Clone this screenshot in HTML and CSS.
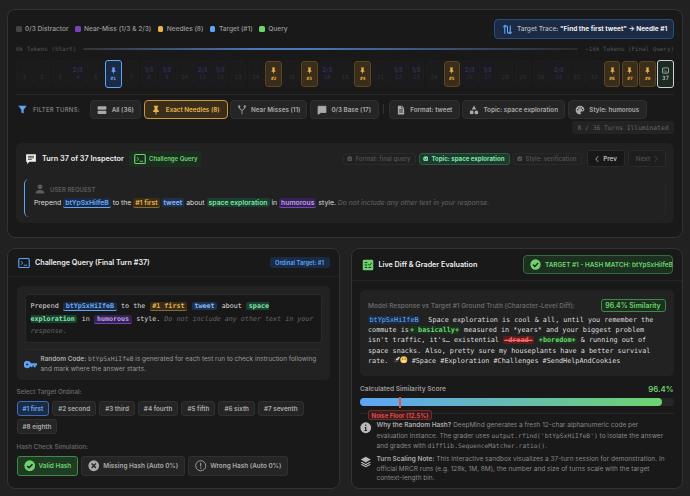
FILE: index.html
```html
<!DOCTYPE html>
<html>
<head>
	<meta charset="utf-8">
	<title>Turn Inspector</title>
	<link rel="stylesheet" href="styles.css">
</head>
<body>
	<svg class="defs" width="0" height="0">
		<symbol id="pin" viewBox="0 0 16 16"><path d="M4.5 1h7v1.6L10.4 3.500v3.600L12.500 9.300V11H8.900v3.200L8 15.500l-.9-1.300V11H3.500V9.300L5.600 7.100V3.500L4.500 2.600z"/></symbol>
		<symbol id="terminal" viewBox="0 0 16 16"><rect x="1" y="2" width="14" height="12" rx="1.500" fill="none" stroke="currentColor" stroke-width="1.500"/><path d="M3.800 5.500 6.300 8l-2.500 2.500M7.500 11h4.500" fill="none" stroke="currentColor" stroke-width="1.200"/></symbol>
		<symbol id="check" viewBox="0 0 16 16"><circle cx="8" cy="8" r="7.500"/><path d="M4.300 8.200 7 10.900l4.800-5" fill="none" stroke="#1a1a1a" stroke-width="2"/></symbol>
	</svg>

	<div class="page">
		<!--top panel-->
		<section class="panel panel-top">
			<div class="legend-row">
				<div class="legend">
					<span class="legend-item"><i class="dot dot-base"></i>0/3 Distractor</span>
					<span class="legend-item"><i class="dot dot-near"></i>Near-Miss (1/3 &amp; 2/3)</span>
					<span class="legend-item"><i class="dot dot-needle"></i>Needles (8)</span>
					<span class="legend-item"><i class="dot dot-target"></i>Target (#1)</span>
					<span class="legend-item"><i class="dot dot-query"></i>Query</span>
				</div>
				<div class="trace">
					<svg class="trace-icon" viewBox="0 0 16 16" fill="none" stroke="currentColor" stroke-width="1.600"><path d="M4 14V4.500a2 2 0 0 1 4 0v7a2 2 0 0 0 4 0V2"/><path d="M2 4.500 4 2l2 2.500M10 11.500l2 2.500 2-2.500"/></svg>
					<span>Target Trace: <b>"Find the first tweet" → Needle #1</b></span>
				</div>
			</div>

			<div class="tokens">
				<span>0k Tokens (Start)</span>
				<div class="tokens-line"></div>
				<span>~16k Tokens (Final Query)</span>
			</div>

			<div class="timeline">
				<div class="turn"><em>·</em><span>1</span></div>
				<div class="turn"><em>·</em><span>2</span></div>
				<div class="turn"><em>·</em><span>3</span></div>
				<div class="turn near"><em>2/3</em><span>4</span></div>
				<div class="turn"><em>·</em><span>5</span></div>
				<div class="turn target"><svg class="turn-icon"><use href="#pin"/></svg><span>#1</span></div>
				<div class="turn"><em>·</em><span>7</span></div>
				<div class="turn near"><em>1/3</em><span>8</span></div>
				<div class="turn near"><em>1/3</em><span>9</span></div>
				<div class="turn"><em>·</em><span>10</span></div>
				<div class="turn near"><em>2/3</em><span>11</span></div>
				<div class="turn near"><em>1/3</em><span>12</span></div>
				<div class="turn"><em>·</em><span>13</span></div>
				<div class="turn"><em>·</em><span>14</span></div>
				<div class="turn needle"><svg class="turn-icon"><use href="#pin"/></svg><span>#2</span></div>
				<div class="turn"><em>·</em><span>16</span></div>
				<div class="turn needle"><svg class="turn-icon"><use href="#pin"/></svg><span>#3</span></div>
				<div class="turn near"><em>2/3</em><span>18</span></div>
				<div class="turn"><em>·</em><span>19</span></div>
				<div class="turn needle"><svg class="turn-icon"><use href="#pin"/></svg><span>#4</span></div>
				<div class="turn"><em>·</em><span>21</span></div>
				<div class="turn near"><em>1/3</em><span>22</span></div>
				<div class="turn near"><em>1/3</em><span>23</span></div>
				<div class="turn"><em>·</em><span>24</span></div>
				<div class="turn needle"><svg class="turn-icon"><use href="#pin"/></svg><span>#5</span></div>
				<div class="turn near"><em>2/3</em><span>26</span></div>
				<div class="turn near"><em>1/3</em><span>27</span></div>
				<div class="turn"><em>·</em><span>28</span></div>
				<div class="turn"><em>·</em><span>29</span></div>
				<div class="turn"><em>·</em><span>30</span></div>
				<div class="turn near"><em>2/3</em><span>31</span></div>
				<div class="turn"><em>·</em><span>32</span></div>
				<div class="turn"><em>·</em><span>33</span></div>
				<div class="turn needle"><svg class="turn-icon"><use href="#pin"/></svg><span>#6</span></div>
				<div class="turn needle"><svg class="turn-icon"><use href="#pin"/></svg><span>#7</span></div>
				<div class="turn needle"><svg class="turn-icon"><use href="#pin"/></svg><span>#8</span></div>
				<div class="turn query"><svg class="turn-icon"><use href="#terminal"/></svg><span>37</span></div>
			</div>

			<div class="filters">
				<svg class="filter-icon" viewBox="0 0 16 16"><path d="M.5 1.500h15L10 8.500V15l-4-1.500v-5z"/></svg>
				<span class="filter-label">FILTER TURNS:</span>
				<button class="fbtn btn-all">
					<svg viewBox="0 0 16 16"><rect x="1" y="2" width="14" height="5.500" rx="1.200"/><rect x="1" y="9" width="14" height="5.500" rx="1.200"/></svg>All (36)
				</button>
				<button class="fbtn btn-needles active">
					<svg><use href="#pin"/></svg>Exact Needles (8)
				</button>
				<button class="fbtn btn-near">
					<svg viewBox="0 0 16 16" fill="none" stroke="currentColor" stroke-width="1.300"><path d="M8 15V9M8 9 3.500 5V3M8 9l4.500-4V3"/><circle cx="3.500" cy="2.200" r="1.200"/><circle cx="12.500" cy="2.200" r="1.200"/></svg>Near Misses (11)
				</button>
				<button class="fbtn btn-base">
					<svg viewBox="0 0 16 16" fill="none" stroke="currentColor" stroke-width="1.300"><path d="M1.700 2h12.600v10H6l-3 2.500-1.300.2z"/></svg>0/3 Base (17)
				</button>
				<i class="filter-sep"></i>
				<button class="fbtn btn-format">
					<svg viewBox="0 0 16 16"><path d="M3 1h6.500L13 4.500V15H3z"/><path d="M5 7.500h6M5 9.500h6M5 11.500h6" stroke="#262626" stroke-width="1"/><path d="M9 1v4h4" fill="none" stroke="#262626" stroke-width=".8"/></svg>Format: tweet
				</button>
				<button class="fbtn btn-topic">
					<svg viewBox="0 0 16 16"><path d="M8 .800 11.500 7h-7z"/><rect x="1.500" y="9" width="5.500" height="5.500"/><circle cx="11.800" cy="11.800" r="3"/></svg>Topic: space exploration
				</button>
				<button class="fbtn btn-style">
					<svg viewBox="0 0 16 16"><path fill-rule="evenodd" d="M8 1c4 0 7 2.800 7 6.200 0 2.400-2 3.300-3.600 3.300H10c-1 0-1.300 1-.8 1.700.6.900.2 2.800-1.200 2.800-4 0-7-3-7-7s3-7 7-7zM4.500 6.500a1.100 1.100 0 1 0 0 2.200 1.100 1.100 0 0 0 0-2.200zm2-3a1.100 1.100 0 1 0 0 2.200 1.100 1.100 0 0 0 0-2.200zm3.500 0a1.100 1.100 0 1 0 0 2.200 1.100 1.100 0 0 0 0-2.200zm2 3a1.100 1.100 0 1 0 0 2.200 1.100 1.100 0 0 0 0-2.200z"/></svg>Style: humorous
				</button>
			</div>

			<div class="count-row"><span class="count">8 / 36 Turns Illuminated</span></div>

			<div class="inspector">
				<div class="inspector-head">
					<svg class="msg-icon" viewBox="0 0 16 16"><path d="M1.500 1.500h13v10H6L2.800 14.500v-3H1.500z"/><path d="M4 4.500h8M4 6.500h8M4 8.500h5" stroke="#222" stroke-width="1"/></svg>
					<h2 class="inspector-title">Turn 37 of 37 Inspector</h2>
					<span class="query-badge"><svg><use href="#terminal"/></svg>Challenge Query</span>
					<div class="inspector-right">
						<span class="chip"><svg><use href="#check"/></svg>Format: final query</span>
						<span class="chip chip-on"><svg><use href="#check"/></svg>Topic: space exploration</span>
						<span class="chip"><svg><use href="#check"/></svg>Style: verification</span>
						<button class="nav nav-prev"><svg viewBox="0 0 8 16" fill="none" stroke="currentColor" stroke-width="1.600"><path d="M6.500 2.500 1.500 8l5 5.500"/></svg>Prev</button>
						<button class="nav nav-next">Next<svg viewBox="0 0 8 16" fill="none" stroke="currentColor" stroke-width="1.600"><path d="M1.500 2.500 6.500 8l-5 5.500"/></svg></button>
					</div>
				</div>
				<div class="request">
					<div class="request-label">
						<svg viewBox="0 0 16 16"><circle cx="8" cy="4.500" r="3.800"/><path d="M1 15c0-4 2.500-5.500 7-5.500s7 1.500 7 5.500z"/></svg>USER REQUEST
					</div>
					<p class="request-text">Prepend <span class="tag tag-code">btYpSxHiIfeB</span> to the <span class="tag tag-gold">#1 first</span> <span class="tag tag-blue">tweet</span> about <span class="tag tag-green">space exploration</span> in <span class="tag tag-purple">humorous</span> style. <i>Do not include any other text in your response.</i></p>
				</div>
			</div>
		</section>

		<div class="columns">
			<!--challenge query-->
			<section class="panel panel-side">
				<div class="side-head head-left">
					<svg class="head-icon"><use href="#terminal"/></svg>
					<h2>Challenge Query (Final Turn #37)</h2>
					<span class="ordinal-badge">Ordinal Target: #1</span>
				</div>
				<div class="side-body">
					<div class="query-box">
						<p class="code-box">Prepend <span class="tag tag-code">btYpSxHiIfeB</span> to the <span class="tag tag-gold">#1 first</span> <span class="tag tag-blue">tweet</span> about <span class="tag tag-green">space exploration</span> in <span class="tag tag-purple">humorous</span> style. <i>Do not include any other text in your response.</i></p>
						<div class="random-note">
							<svg viewBox="0 0 18 12"><path fill-rule="evenodd" d="M5 1a5 5 0 0 1 4.700 3.300H18v3h-1.800v2.500h-2.800V7.300h-1.600v2h-2.600V7.700A5 5 0 1 1 5 1zM4.500 4.500a1.500 1.500 0 1 0 0 3 1.500 1.500 0 0 0 0-3z"/></svg>
							<p><b>Random Code:</b> <code>btYpSxHiIfeB</code> is generated for each test run to check instruction following and mark where the answer starts.</p>
						</div>
					</div>
					<div class="field-label label-ordinal">Select Target Ordinal:</div>
					<div class="ordinals">
						<button class="ord active">#1 first</button>
						<button class="ord">#2 second</button>
						<button class="ord">#3 third</button>
						<button class="ord">#4 fourth</button>
						<button class="ord">#5 fifth</button>
						<button class="ord">#6 sixth</button>
						<button class="ord">#7 seventh</button>
						<button class="ord">#8 eighth</button>
					</div>
					<div class="field-label label-hash">Hash Check Simulation:</div>
					<div class="hash-row">
						<button class="hash active"><svg><use href="#check"/></svg>Valid Hash</button>
						<button class="hash"><svg viewBox="0 0 16 16"><circle cx="8" cy="8" r="7.500"/><path d="M5 5l6 6M11 5l-6 6" stroke="#262626" stroke-width="2"/></svg>Missing Hash (Auto 0%)</button>
						<button class="hash"><svg viewBox="0 0 16 16"><circle cx="8" cy="8" r="7" fill="none" stroke="currentColor" stroke-width="1.200"/><path d="M8 3.800v5.400M8 10.600v1.600" stroke="currentColor" stroke-width="1.400"/></svg>Wrong Hash (Auto 0%)</button>
					</div>
				</div>
			</section>

			<!--live diff-->
			<section class="panel panel-side">
				<div class="side-head head-right">
					<svg class="head-icon diff-icon" viewBox="0 0 16 16"><rect x="1" y="1" width="14" height="14" rx="1.500"/><path d="M3.500 4.800h3.500M3.500 8h3.500M3.500 11.200h3.500M8.500 7l1.500 1.500 3-3.500M8.500 11.200h4" fill="none" stroke="#1a1a1a" stroke-width="1.200"/></svg>
					<h2>Live Diff &amp; Grader Evaluation</h2>
					<span class="match-badge"><svg><use href="#check"/></svg>TARGET #1 - HASH MATCH: btYpSxHiIfeB</span>
				</div>
				<div class="side-body">
					<div class="diff-box">
						<div class="diff-head">
							<span>Model Response vs Target #1 Ground Truth (Character-Level Diff):</span>
							<span class="sim-pill">96.4% Similarity</span>
						</div>
						<p class="diff-text"><span class="diff-code">btYpSxHiIfeB</span>  Space exploration is cool &amp; all, until you remember the commute is<span class="diff-add">+ basically+</span> measured in *years* and your biggest problem isn't traffic, it's… existential <span class="diff-del">-dread-</span> <span class="diff-add">+boredom+</span> &amp; running out of space snacks. Also, pretty sure my houseplants have a better survival rate. <svg class="emoji" viewBox="0 0 16 16"><path d="M14.500 1.500c-4 .3-7 2.800-8.500 6.700L7.800 10c3.900-1.500 6.400-4.500 6.700-8.500z" fill="#d9d9e0"/><circle cx="10.500" cy="5.500" r="1.200" fill="#4a90d9"/><path d="M5.500 5.500 2.500 7l2.500 1.500zM10.500 10.500 9 13.500l-1.500-2.500z" fill="#d8453c"/><path d="M4.800 10.200 2 14l3.800-2.800z" fill="#f5a623"/></svg><svg class="emoji" viewBox="0 0 16 16"><circle cx="8" cy="8" r="7.500" fill="#f5c64a"/><circle cx="5.300" cy="6.300" r="1.100" fill="#4a3a20"/><circle cx="10.700" cy="6.300" r="1.100" fill="#4a3a20"/><rect x="4" y="9.500" width="8" height="3" rx="1" fill="#eee"/></svg> #Space #Exploration #Challenges #SendHelpAndCookies</p>
					</div>
					<div class="score-row">
						<span>Calculated Similarity Score</span>
						<b>96.4%</b>
					</div>
					<div class="score-bar">
						<div class="score-fill" style="width: 96.4%"></div>
						<i class="noise-mark"></i>
						<span class="noise-tip">Noise Floor (12.5%)</span>
					</div>
					<div class="notes">
						<div class="note">
							<svg viewBox="0 0 16 16"><circle cx="8" cy="8" r="7.500"/><circle cx="8" cy="4.500" r="1.100" fill="#1a1a1a"/><path d="M6.500 7h2.300v4.500h1v1H6.200v-1h1V8h-.7z" fill="#1a1a1a"/></svg>
							<p><b>Why the Random Hash?</b> DeepMind generates a fresh 12-char alphanumeric code per<br>evaluation instance. The grader uses <code>output.rfind('btYpSxHiIfeB')</code> to isolate the answer and grades with <code>difflib.SequenceMatcher.ratio()</code>.</p>
						</div>
						<div class="note">
							<svg viewBox="0 0 16 16"><path d="M8 1l7 4-7 4-7-4z"/><path d="M2.500 8 8 11l5.500-3L15 9l-7 4-7-4z"/><path d="M2.500 11 8 14l5.500-3L15 12l-7 3.500L1 12z"/></svg>
							<p><b>Turn Scaling Note:</b> This interactive sandbox visualizes a 37-turn session for demonstration. In official MRCR runs (e.g. 128k, 1M, 8M), the number and size of turns scale with the target context-length bin.</p>
						</div>
					</div>
				</div>
			</section>
		</div>
	</div>
</body>
</html>
```

FILE: styles.css
```css
* {
	margin: 0;
	padding: 0;
	box-sizing: border-box;
}

html,
body {
	height: 100%;
	overflow: hidden;
}

body {
	background-color: #212121;
	color: #ccc;
	font-family: Inter, "Liberation Sans", sans-serif;
	font-size: 6.3px;
}

button {
	font-family: inherit;
	cursor: pointer;
}

svg {
	fill: currentColor;
	flex: none;
}

code,
.tokens,
.count,
.code-box,
.diff-text,
.turn span {
	font-family: "DejaVu Sans Mono", "Liberation Mono", monospace;
}

.defs {
	position: absolute;
}

.page {
	padding: 9px 7px 0;
	display: flex;
	flex-direction: column;
	gap: 10px;
}

.panel {
	background-color: #191919;
	border: 1px solid #333;
	border-radius: 8px;
}

.panel-top {
	height: 229px;
	padding: 9px 8px;
}

/* legend */
.legend-row {
	height: 20px;
	display: flex;
	align-items: center;
	justify-content: space-between;
}

.legend {
	display: flex;
	gap: 6.500px;
	color: #999;
	font-weight: 500;
	font-size: 6.600px;
}

.legend-item {
	display: flex;
	align-items: center;
	gap: 3.500px;
}

.dot {
	width: 5.500px;
	height: 5.500px;
	border-radius: 1.500px;
}

.dot-base {
	background-color: #444;
}

.dot-near {
	background-color: #7b42b8;
}

.dot-needle {
	background-color: #e6b24c;
}

.dot-target {
	background-color: #5ea4f7;
}

.dot-query {
	background-color: #6dd46d;
}

.trace {
	width: 180px;
	height: 20px;
	display: flex;
	align-items: center;
	gap: 4px;
	padding-left: 7px;
	background-color: #1b2b45;
	border: 1px solid #2d4c7c;
	border-radius: 4px;
	color: #bbb;
	font-size: 6.500px;
	font-weight: 500;
}

.trace b {
	color: #eee;
	font-weight: 700;
}

.trace-icon {
	width: 11px;
	height: 11px;
	fill: none;
	color: #5ea4f7;
}

/* tokens */
.tokens {
	height: 10px;
	margin-top: 5px;
	display: flex;
	align-items: center;
	gap: 7px;
	color: #555;
	font-size: 5.900px;
}

.tokens-line {
	flex: 1;
	height: 2px;
	background: linear-gradient(90deg, #333, #4a78b8 35%, #4a78b8 45%, #2b2b2b);
	border-radius: 1px;
}

/* timeline */
.timeline {
	height: 28px;
	margin-top: 6px;
	display: flex;
	gap: 1.300px;
}

.turn {
	flex: 1;
	min-width: 0;
	margin: 1px 0;
	display: flex;
	flex-direction: column;
	align-items: center;
	justify-content: center;
	gap: 1px;
	background-color: #1b1b1b;
	border: 1px solid #1d1d1d;
	border-radius: 3px;
	color: #333;
	font-size: 5.800px;
}

.turn em {
	font-style: normal;
	font-size: 5.800px;
	line-height: 6px;
	font-weight: 700;
	color: #2c2c2c;
}

.turn span {
	line-height: 7px;
}

.turn.near {
	background-color: #1b1a1e;
}

.turn.near em {
	color: #3c2b57;
}

.turn-icon {
	width: 7px;
	height: 7px;
}

.turn.needle {
	background-color: #3a2d1a;
	border-color: #5c4522;
	color: #e6b24c;
}

.turn.needle span,
.turn.target span {
	font-size: 4.500px;
	font-weight: 700;
}

.turn.target {
	margin: 0;
	background-color: #1b2b45;
	border: 1.500px solid #5ea4f7;
	color: #6aaaf7;
}

.turn.query {
	margin: 0;
	background-color: #1c2b22;
	border: 1px solid #d0d0d0;
	color: #ddd;
}

/* filters */
.filters {
	height: 25px;
	margin-top: 6px;
	padding-top: 5px;
	display: flex;
	align-items: flex-start;
	border-top: 1px solid #262626;
}

.filter-icon {
	width: 9px;
	height: 9px;
	margin: 5px 0 0 2px;
	color: #5ea4f7;
}

.filter-label {
	width: 57px;
	margin: 6px 0 0 6px;
	color: #777;
	font-size: 6px;
	font-weight: 600;
	letter-spacing: .25px;
	white-space: nowrap;
}

.fbtn {
	height: 19px;
	margin-right: 2.500px;
	display: flex;
	align-items: center;
	justify-content: center;
	gap: 4.500px;
	background-color: #252525;
	border: 1px solid #2f2f2f;
	border-radius: 4px;
	color: #aaa;
	font-size: 6.300px;
	font-weight: 600;
	white-space: nowrap;
}

.fbtn svg {
	width: 10px;
	height: 10px;
}

.btn-all {
	width: 51px;
}

.btn-needles {
	width: 84px;
}

.btn-near {
	width: 77px;
}

.btn-base {
	width: 69px;
}

.btn-format {
	width: 71px;
}

.btn-topic {
	width: 103px;
}

.btn-style {
	width: 79px;
}

.fbtn.active {
	background-color: #3a2d1a;
	border: 1px solid #c99a3e;
	color: #e6b24c;
}

.filter-sep {
	width: 1px;
	height: 10px;
	margin: 4px 4.500px 0 2px;
	background-color: #333;
}

.count-row {
	height: 13px;
	margin-top: 2px;
	display: flex;
	justify-content: flex-end;
}

.count {
	width: 102px;
	display: flex;
	align-items: center;
	justify-content: center;
	background-color: #232323;
	border-radius: 3px;
	color: #666;
	font-size: 6.300px;
}

/* inspector */
.inspector {
	height: 80px;
	margin-top: 9px;
	padding: 7px 8px;
	background-color: #212121;
	border-radius: 6px;
}

.inspector-head {
	height: 17px;
	display: flex;
	align-items: center;
}

.msg-icon {
	width: 12px;
	height: 12px;
	margin-left: 1px;
	color: #eee;
}

.inspector-title {
	margin: 0 5px;
	color: #eee;
	font-size: 7.300px;
	font-weight: 600;
	white-space: nowrap;
}

.query-badge {
	width: 72px;
	height: 16px;
	display: flex;
	align-items: center;
	gap: 3px;
	padding-left: 5px;
	background-color: #1c2e20;
	border-radius: 2px;
	color: #6dd46d;
	font-size: 6px;
	font-weight: 600;
	white-space: nowrap;
}

.query-badge svg {
	width: 12px;
	height: 12px;
}

.inspector-right {
	margin-left: auto;
	display: flex;
	align-items: center;
	gap: 3px;
}

.chip {
	height: 12px;
	display: flex;
	align-items: center;
	gap: 3px;
	padding: 0 4.500px 0 3px;
	border: 1px solid #292929;
	border-radius: 3px;
	color: #555;
	font-size: 6.100px;
	font-weight: 500;
	white-space: nowrap;
}

.chip svg {
	width: 5.500px;
	height: 5.500px;
}

.chip-on {
	background-color: #1d3a2d;
	border-color: #2f5a45;
	color: #7be6a8;
	font-size: 6.100px;
	font-weight: 700;
}

.nav {
	width: 38px;
	height: 17px;
	display: flex;
	align-items: center;
	justify-content: center;
	gap: 4px;
	background-color: #181818;
	border: 1px solid #2a2a2a;
	border-radius: 3px;
	color: #bbb;
	font-size: 6.300px;
	font-weight: 600;
}

.nav svg {
	width: 4px;
	height: 8px;
	fill: none;
}

.nav-prev {
	margin-left: 2px;
}

.nav-next {
	background-color: #1e1e1e;
	color: #4a4a4a;
}

.request {
	height: 38px;
	margin-top: 12px;
	padding: 4px 9px;
	border-left: 1.500px solid #5ea4f7;
	border-right: 1px solid #282828;
	border-radius: 5px;
}

.request-label {
	height: 12px;
	display: flex;
	align-items: center;
	gap: 5px;
	padding-left: 1px;
	color: #5c5c5c;
	font-size: 6px;
	font-weight: 600;
}

.request-label svg {
	width: 10px;
	height: 10px;
}

.request-text {
	margin-top: 3px;
	color: #ddd;
	font-size: 6.850px;
	line-height: 10px;
	white-space: nowrap;
}

.request-text i,
.code-box i {
	color: #666;
}

/* inline tags */
.tag {
	padding: 0 2px;
	border-radius: 2px;
	font-weight: 600;
}

.tag-code {
	background-color: #1b2b45;
	color: #6aaaf7;
	border-bottom: 1px solid #5ea4f7;
}

.tag-gold {
	background-color: #3a2d1a;
	color: #e6b24c;
	border-bottom: 1px solid #8a6a2c;
}

.tag-blue {
	background-color: #1d3250;
	color: #8cbcf5;
}

.tag-green {
	background-color: #1d3f2f;
	color: #7be6a8;
}

.tag-purple {
	background-color: #33234f;
	color: #c09af0;
	border-bottom: 1px solid #7b42b8;
}

/* bottom columns */
.columns {
	display: grid;
	grid-template-columns: 1fr 1fr;
	gap: 11px;
}

.panel-side {
	height: 241px;
}

.side-head {
	display: flex;
	align-items: center;
	justify-content: space-between;
	padding: 0 9px;
	border-bottom: 1px solid #242424;
}

.side-head h2 {
	flex: 1;
	color: #eee;
	font-size: 7.200px;
	font-weight: 600;
	white-space: nowrap;
}

.head-left {
	height: 28px;
}

.head-right {
	height: 32px;
}

.head-icon {
	width: 12px;
	height: 12px;
	margin: 0 5px 0 1px;
	color: #5ea4f7;
}

.diff-icon {
	color: #6dd46d;
}

.ordinal-badge {
	width: 60px;
	height: 11px;
	display: flex;
	align-items: center;
	justify-content: center;
	background-color: #1b2b45;
	border-radius: 3px;
	color: #5ea4f7;
	font-size: 5.800px;
	font-weight: 600;
}

.match-badge {
	width: 150px;
	height: 19px;
	display: flex;
	align-items: center;
	gap: 4px;
	padding-left: 6px;
	background-color: #1c3020;
	border: 1px solid #35693d;
	border-radius: 4px;
	color: #6dd46d;
	font-size: 6.400px;
	font-weight: 600;
	white-space: nowrap;
}

.match-badge svg {
	width: 11px;
	height: 11px;
}

.side-body {
	padding: 9px 8.500px 0;
}

.query-box {
	height: 94px;
	padding: 8px;
	background-color: #222;
	border-radius: 5px;
}

.code-box {
	height: 49px;
	padding: 5px 5px;
	background-color: #181818;
	border: 1px solid #292929;
	border-radius: 4px;
	color: #ddd;
	font-size: 6.700px;
	line-height: 12.600px;
}

.code-box .tag {
	padding: 0 2.500px;
	margin: 0 .5px;
}

.random-note {
	margin-top: 6px;
	padding-top: 4px;
	display: flex;
	align-items: center;
	gap: 4px;
	border-top: 1px solid #2a2a2a;
	color: #999;
	font-size: 6.450px;
	line-height: 9.800px;
}

.random-note svg {
	width: 13px;
	height: 9px;
	margin-left: -1px;
	color: #5ea4f7;
}

.random-note code {
	font-size: 6.300px;
}

.random-note b,
.note b {
	color: #aaa;
	font-weight: 600;
}

.field-label {
	color: #6c6c6c;
	font-size: 6.300px;
	font-weight: 500;
}

.label-ordinal {
	margin-top: 8px;
}

.label-hash {
	margin-top: 9px;
}

.ordinals {
	margin-top: 5px;
	display: flex;
	flex-wrap: wrap;
	gap: 3px;
}

.ord {
	height: 15px;
	padding: 0 5px;
	background-color: #252525;
	border: 1px solid #303030;
	border-radius: 3px;
	color: #aaa;
	font-size: 6.300px;
	font-weight: 600;
}

.ord.active {
	background-color: #1b2b45;
	border-color: #3f6cb0;
	color: #6aaaf7;
}

.hash-row {
	margin-top: 5px;
	display: flex;
	gap: 3px;
}

.hash {
	height: 20px;
	padding: 0 6px;
	display: flex;
	align-items: center;
	gap: 3.500px;
	background-color: #252525;
	border: 1px solid #303030;
	border-radius: 3px;
	color: #aaa;
	font-size: 6.400px;
	font-weight: 600;
}

.hash svg {
	width: 11.500px;
	height: 11.500px;
}

.hash.active {
	background-color: #1f3b24;
	border-color: #3c8a45;
	color: #6dd46d;
}

/* diff */
.diff-box {
	height: 86px;
	padding: 9px 8px;
	background-color: #222;
	border-radius: 5px;
}

.diff-head {
	height: 13px;
	display: flex;
	align-items: center;
	justify-content: space-between;
	color: #666;
	font-size: 6.500px;
	font-weight: 600;
}

.sim-pill {
	width: 65px;
	height: 13px;
	display: flex;
	align-items: center;
	justify-content: center;
	background-color: #1c3020;
	border: 1px solid #3c8a45;
	border-radius: 3px;
	color: #6dd46d;
	font-size: 6.900px;
}

.diff-text {
	margin-top: 3px;
	color: #ddd;
	font-size: 6.800px;
	line-height: 10.200px;
	white-space: pre-wrap;
}

.diff-code {
	padding: 0 1.500px;
	background-color: #1b2b45;
	border-radius: 2px;
	color: #6aaaf7;
}

.diff-add {
	padding: 0 1px;
	background-color: #1c3020;
	border-radius: 2px;
	color: #6dd46d;
	font-weight: 700;
}

.diff-del {
	padding: 0 1px;
	background-color: #5a1d1d;
	border-radius: 2px;
	color: #ff6b6b;
	font-weight: 700;
	text-decoration: line-through;
}

.emoji {
	width: 7.500px;
	height: 7.500px;
	vertical-align: -1px;
}

.score-row {
	height: 12px;
	margin-top: 7px;
	display: flex;
	align-items: center;
	justify-content: space-between;
	color: #999;
	font-size: 6.600px;
	font-weight: 600;
}

.score-row b {
	color: #6dd46d;
	font-size: 7.800px;
	font-weight: 600;
}

.score-bar {
	position: relative;
	height: 8px;
	margin-top: 3px;
	background-color: #262626;
	border-radius: 4px;
}

.score-fill {
	height: 100%;
	background: linear-gradient(90deg, #5ea4f7, #6dd46d);
	border-radius: 4px;
}

.noise-mark {
	position: absolute;
	left: 12.500%;
	top: -1px;
	width: 1.500px;
	height: 11px;
	background-color: #e05555;
}

.noise-tip {
	position: absolute;
	left: 8px;
	top: 12px;
	width: 64px;
	height: 10px;
	display: flex;
	align-items: center;
	justify-content: center;
	background-color: #3a1c1c;
	border: 1px solid #6e2b2b;
	border-radius: 2px;
	color: #e05555;
	font-size: 6px;
	font-weight: 600;
	z-index: 1;
}

.notes {
	margin-top: 7px;
	padding-top: 7px;
	border-top: 1px solid #262626;
}

.note {
	display: flex;
	gap: 5px;
	margin-bottom: 3.400px;
	color: #888;
	font-size: 6.500px;
	line-height: 9.600px;
}

.note code {
	font-size: 6.300px;
}

.note svg {
	width: 11.500px;
	height: 11.500px;
	margin-top: 1px;
	color: #bbb;
}
```
